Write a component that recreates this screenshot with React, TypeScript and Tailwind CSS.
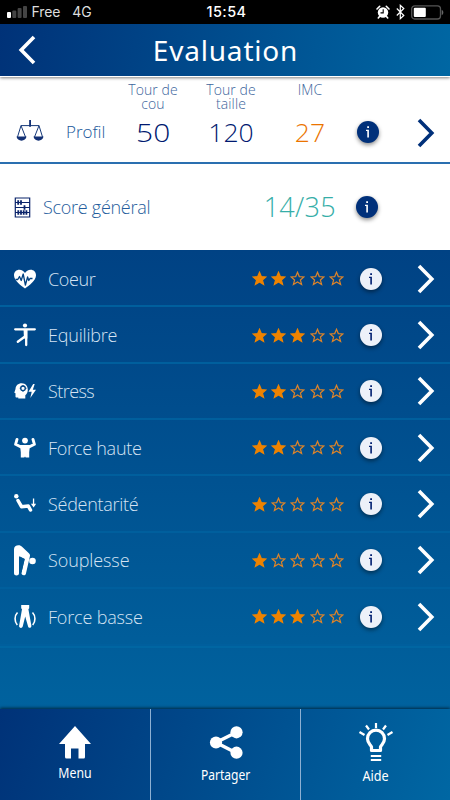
import React, { FC, ReactNode } from "react";
import clsx from "clsx";

interface Category {
  label: string;
  score: number;
  spacing: string;
  icon: ReactNode;
}

const HeartIcon = () => (
  <svg className="h-8 w-[22px]" viewBox="0 0 22 32" fill="#fff">
    <path d="M11 25.6C7 22.3 0 17.7 0 12.2 0 8.900 2.300 6.700 5.400 6.700c2.400 0 4.500 1.300 5.600 3.300 1.100-2 3.200-3.300 5.600-3.300 3.100 0 5.400 2.200 5.400 5.500 0 5.500-7 10.100-11 13.400z" />
    <path
      d="M1.500 16.500h2.300l1.700-3 1.700 4 2-6.500 2.200 11 2.200-8 1.200 3.500 1.200-2h2.500"
      fill="none"
      stroke="#004080"
      strokeWidth="1.300"
      strokeLinejoin="round"
    />
  </svg>
);

const BalanceIcon = () => (
  <svg className="h-8 w-[22px]" viewBox="0 0 22 32">
    <circle cx="11" cy="6.500" r="2.100" fill="#fff" />
    <path
      d="M1.200 10.300h19.600M12.200 11v15M11 17.500L3.800 22.800"
      fill="none"
      stroke="#fff"
      strokeWidth="2.300"
      strokeLinecap="round"
    />
    <path d="M9.500 10h3.800v9.500H10z" fill="#fff" />
  </svg>
);

const StressIcon = () => (
  <svg className="h-8 w-[22px]" viewBox="0 0 22 32">
    <path
      d="M7.800 8.300c-3.700 0-6.200 2.300-6.300 5.800L.3 17.800l1.200.5v3.200c0 .8.5 1.200 1.300 1.100l1.500-.2v1.200h7v-3.300c1.500-1.200 2.500-3.200 2.500-5.500 0-3.600-2.300-6.500-6-6.500z"
      fill="#fff"
    />
    <circle cx="9" cy="13.300" r="2.300" fill="none" stroke="#004888" strokeWidth="1.300" />
    <path d="M9 10v1.500M9 15v1.800M5.700 13.300h1.500M10.900 13.300h1.600" stroke="#004888" strokeWidth="1.100" />
    <path d="M19.200 9l-4.700 7.800h3.200L16.300 23l5.700-8.300h-3.200L20.700 9z" fill="#fff" />
  </svg>
);

const UpperStrengthIcon = () => (
  <svg className="h-8 w-[22px]" viewBox="0 0 22 32" fill="#fff">
    <circle cx="11" cy="8.600" r="2.900" />
    <path
      d="M3 7.400L1.600 12.300l4.900 2.400M19 7.400l1.400 4.900-4.900 2.400"
      fill="none"
      stroke="#fff"
      strokeWidth="2.900"
      strokeLinecap="round"
      strokeLinejoin="round"
    />
    <path d="M6 13h10l-.8 7.300v5.200h-3.500l-.7-1-.7 1H6.800v-5.200z" />
  </svg>
);

const SittingIcon = () => (
  <svg className="h-8 w-[22px]" viewBox="0 0 22 32" fill="#fff">
    <circle cx="2.300" cy="8.200" r="2.200" />
    <path
      d="M4 12.500l3.500 6.200 6.800-.7 2.200 4"
      fill="none"
      stroke="#fff"
      strokeWidth="3.500"
      strokeLinecap="round"
      strokeLinejoin="round"
    />
    <path d="M18.900 10.600h1.300v5.200h2l-2.600 3.700-2.700-3.700h2z" />
  </svg>
);

const BendingIcon = () => (
  <svg className="h-8 w-[22px]" viewBox="0 0 22 32" fill="#fff">
    <circle cx="18.500" cy="17" r="3.300" />
    <path d="M0 5.200C0 2.800 2 1.300 4.500 1.300c1.500 0 2.700.5 3.800 1.600l6.600 6.300c1 .9 1.400 2.200.9 3.500l-3.900 17.100c-.8 2.500-4.700 1.700-4.400-1L10.700 15l-5.700-2.600v16.900c0 2.900-5 2.900-5 0z" />
    <path d="M5.500 12.200l5.200 2.800L7.500 28.500 5 29.500z" fill="#005693" />
  </svg>
);

const LowerStrengthIcon = () => (
  <svg className="h-8 w-[22px]" viewBox="0 0 22 32" fill="#fff">
    <path d="M7.200 4h8v3.200l-.8 1 3 16.600c.2 2.300-2.700 2.900-3.300.6L11.200 15.500 8.700 25.600c-.7 2.200-3.900 1.400-3.600-.9L8 8.200l-.8-1z" />
    <path
      d="M3.500 11.500c-3.200 3.300-3.200 8.900-.2 12.600M18.500 11.500c3.200 3.300 3.200 8.900.2 12.600"
      fill="none"
      stroke="#fff"
      strokeWidth="1.600"
    />
  </svg>
);

const categories: Category[] = [
  { label: "Coeur", score: 2, spacing: "tracking-[-0.35px]", icon: <HeartIcon /> },
  { label: "Equilibre", score: 3, spacing: "tracking-[-0.2px]", icon: <BalanceIcon /> },
  { label: "Stress", score: 2, spacing: "tracking-[-0.55px]", icon: <StressIcon /> },
  { label: "Force haute", score: 2, spacing: "tracking-[-0.25px]", icon: <UpperStrengthIcon /> },
  { label: "Sédentarité", score: 1, spacing: "tracking-[-0.28px]", icon: <SittingIcon /> },
  { label: "Souplesse", score: 1, spacing: "tracking-[-0.1px]", icon: <BendingIcon /> },
  { label: "Force basse", score: 3, spacing: "tracking-[-0.18px]", icon: <LowerStrengthIcon /> },
];

const Chevron: FC<{ className?: string }> = ({ className }) => (
  <svg className={clsx("h-[30px] w-[18px] shrink-0", className)} viewBox="0 0 18 30" fill="none" stroke="currentColor" strokeWidth="3.600">
    <path d="M2 2l12.800 13L2 28" />
  </svg>
);

const InfoButton: FC<{ dark?: boolean }> = ({ dark }) => (
  <button
    className={clsx(
      "flex size-[22px] shrink-0 items-center justify-center rounded-full shadow-[0_2px_4px_rgba(0,0,0,0.45)]",
      dark ? "bg-[#00307a] text-white" : "bg-[#edf1f9] text-[#001f70]"
    )}
  >
    <svg className="h-[14px] w-2" viewBox="0 0 8 14">
      <path d="M3.200 1.200H5V3H3.200zM2 4.800h2.900v7.700H3.300V5.900H2z" fill="currentColor" />
    </svg>
  </button>
);

const Star: FC<{ filled: boolean }> = ({ filled }) => (
  <svg className="size-[15px]" viewBox="0 0 15 15">
    <path
      d="M7.500 1.300l1.800 4.300 4.600.4-3.500 3 1.200 4.500-4.100-2.500-4.100 2.500L4.600 9 1.100 6l4.600-.4z"
      fill={filled ? "#ee8300" : "none"}
      stroke={filled ? "#ee8300" : "#dd8429"}
      strokeWidth="1.200"
    />
  </svg>
);

const StatusBar = () => (
  <div className="relative flex h-6 items-center justify-between bg-black text-[14px] leading-6 text-[#ddd]">
    <div className="flex items-center pl-[7px]">
      <svg className="h-3 w-5" viewBox="0 0 20 12">
        <rect x="0" y="6" width="4" height="6" rx="1" fill="#fff" />
        <rect x="5.300" y="4.500" width="4" height="7.500" rx="1" fill="#444" />
        <rect x="10.600" y="2" width="4" height="10" rx="1" fill="#444" />
        <rect x="16" y="0" width="4" height="12" rx="1" fill="#444" />
      </svg>
      <span className="ml-[4.500px] tracking-[-0.1px]">Free</span>
      <span className="ml-3">4G</span>
    </div>
    <span className="absolute left-1/2 ml-[1.500px] -translate-x-1/2 text-[14.500px] font-medium tracking-[0.4px] text-white">
      15:54
    </span>
    <div className="flex items-center pr-[6px]">
      <svg className="h-[14px] w-[14px]" viewBox="0 0 14 14">
        <circle cx="7" cy="7.500" r="5.200" fill="#fff" />
        <path d="M1 4l2.700-2.700M13 4l-2.700-2.700M3.500 11.500L2.300 13M10.500 11.500l1.200 1.500" stroke="#fff" strokeWidth="1.600" strokeLinecap="round" />
        <path d="M7.200 4.300v3.600H4.500" fill="none" stroke="#000" strokeWidth="1.100" />
      </svg>
      <svg className="ml-[6px] h-4 w-[9px]" viewBox="0 0 9 16" fill="none" stroke="#fff" strokeWidth="1.200">
        <path d="M.8 4.500l7 7-3.500 3.200V1.300l3.500 3.200-7 7" />
      </svg>
      <svg className="ml-[6px] h-[15px] w-[33px]" viewBox="0 0 33 15">
        <rect x=".7" y=".8" width="28.800" height="13.200" rx="3" fill="none" stroke="#555" strokeWidth="1.300" />
        <rect x="2.800" y="2.800" width="12" height="9.200" rx="1" fill="#fff" />
        <path d="M30.700 5c2.200.4 2.200 4.600 0 5z" fill="#666" />
      </svg>
    </div>
  </div>
);

const Measure: FC<{ title: ReactNode; value: number; className: string; valueClassName?: string }> = ({
  title,
  value,
  className,
  valueClassName = "text-[#001970]",
}) => (
  <div className={clsx("flex shrink-0 flex-col items-center text-center", className)}>
    <div className="h-8 text-[14px] leading-[14px] tracking-[0.1px] whitespace-nowrap text-[#3c659c]">{title}</div>
    <div className={clsx("text-[26.500px] leading-[34px]", valueClassName)}>{value}</div>
  </div>
);

const CategoryRow: FC<{ category: Category }> = ({ category }) => (
  <li className="flex h-[56.36px] items-center border-b-2 border-[#005f9d] pt-px pr-[15px] pl-[14px] text-white">
    {category.icon}
    <span className={clsx("ml-[12px] grow text-[18px] leading-6 text-[#d5e3f3]", category.spacing)}>
      {category.label}
    </span>
    <div className="flex gap-[4.300px]">
      {[1, 2, 3, 4, 5].map((n) => (
        <Star key={n} filled={n <= category.score} />
      ))}
    </div>
    <div className="mr-[35px] ml-[16px] flex">
      <InfoButton />
    </div>
    <Chevron />
  </li>
);

const App = () => {
  return (
    <div className="flex h-[800px] w-[450px] flex-col overflow-hidden bg-white font-['Open_Sans','Noto_Sans',sans-serif] font-light">
      <div className="font-['Inter',sans-serif] font-normal">
        <StatusBar />
      </div>

      <header className="relative z-10 flex h-[53px] shrink-0 items-center border-b border-white bg-linear-[100deg] from-[#003278] to-[#0067a3] pl-[18px] text-white shadow-[0_1px_3px_rgba(0,0,0,0.5)]">
        <Chevron className="rotate-180" />
        <h1 className="grow pr-[35px] pb-px text-center font-['Noto_Sans',sans-serif] text-[28px] leading-[50px] font-normal tracking-[0.8px]">
          Evaluation
        </h1>
      </header>

      <section className="flex h-[87px] shrink-0 items-start border-b-2 border-[#2a6fb0] pt-[6px] pr-[15px] pl-[16px]">
        <svg className="mt-[36px] h-[24px] w-[28px] shrink-0" viewBox="0 0 28 24">
          <path d="M14 1v7M5 6.600h18M5 6.600L1.500 18M5 6.600L9.500 18M23 6.600L18.500 18M23 6.600L26.500 18" fill="none" stroke="#173a7a" strokeWidth="1" />
          <path d="M13.300 1h1.700v6.500h-1.700zM.5 17.500h10c-.6 5.500-9.400 5.500-10 0zM17.500 17.500h10c-.6 5.500-9.400 5.500-10 0z" fill="#123074" />
        </svg>
        <div className="mt-[37px] ml-[22px] w-[50px] text-[17px] leading-6 text-[#17579a]">Profil</div>
        <Measure className="w-[74px]" title={<>Tour de<br />cou</>} value={50} valueClassName="scale-x-113 text-[#001970]" />
        <Measure className="w-[82px]" title={<>Tour de<br />taille</>} value={120} />
        <Measure className="w-[76px]" title="IMC" value={27} valueClassName="text-[#eb7400]" />
        <div className="mt-[38px] ml-[8.500px] flex">
          <InfoButton dark />
        </div>
        <Chevron className="mt-[35px] ml-auto text-[#00307a]" />
      </section>

      <section className="flex h-[86px] shrink-0 items-center pr-[72px] pl-[14px]">
        <svg className="h-[21px] w-[17px]" viewBox="0 0 17 21" fill="none" stroke="#0b246b">
          <path d="M1.300 1h14.400v19H1.300zM1.300 5.500h14.400M1.300 10.500h14.400M1.300 15.500h14.400" strokeWidth="1.200" />
          <path d="M4.200 3.300v4.400M7 3.300v4.400M10.500 8.300v4.400M4.300 13.300v4.400M7 13.300v4.400M9.700 13.300v4.400M12.400 13.300v4.400" strokeWidth="1.800" />
        </svg>
        <span className="ml-[12px] text-[18px] leading-6 tracking-[-0.28px] text-[#245c9c]">Score général</span>
        <span className="ml-auto text-[27px] leading-8 tracking-[0.3px] text-[#36aea8]">14/35</span>
        <div className="ml-[20px] flex">
          <InfoButton dark />
        </div>
      </section>

      <main className="grow bg-linear-to-b from-[#004284] to-[#00629e] pt-px">
        <ul>
          {categories.map((category) => (
            <CategoryRow key={category.label} category={category} />
          ))}
        </ul>
        <div className="h-[2px] bg-[#0066a2]" />
      </main>

      <nav className="relative grid h-[91px] shrink-0 grid-cols-[151px_150px_149px] divide-x divide-[#8db0d3] bg-linear-[110deg] from-[#003278] to-[#0067a3] font-['Noto_Sans',sans-serif] text-[14px] leading-5 font-normal text-white shadow-[0_-1px_3px_rgba(0,0,0,0.6)]">
        <a className="flex flex-col items-center pt-[16px]">
          <svg className="h-[35px] w-[34px]" viewBox="0 0 34 35" fill="#fff">
            <path d="M17 1L1 19h6v13q0 1.500 1.500 1.500H13v-10h7.500v10h5.200q1.300 0 1.300-1.500V19h6z" />
          </svg>
          <span className="mt-[3px] scale-x-88">Menu</span>
        </a>
        <a className="flex flex-col items-center pt-[16px]">
          <svg className="h-[35px] w-[34px]" viewBox="0 0 34 35" fill="#fff">
            <path d="M28 7L7 17.500 28 28.300" fill="none" stroke="#fff" strokeWidth="3.500" />
            <circle cx="27.500" cy="7.300" r="6.100" />
            <circle cx="7" cy="17.500" r="6.100" />
            <circle cx="27.500" cy="27.700" r="6.100" />
          </svg>
          <span className="mt-[5px] scale-x-86">Partager</span>
        </a>
        <a className="flex flex-col items-center pt-[13px]">
          <svg className="h-10 w-9" viewBox="0 0 36 40" fill="none" stroke="#fff">
            <path d="M18 1v5M8 3.500l3 4M28 3.500l-3 4M1.500 10l5 3M34.500 10l-5 3" strokeWidth="2.200" />
            <path d="M13.500 28.500v-3.500c-.7-2.300-4-3.700-4-8.300a8.500 8.500 0 0 1 17 0c0 4.600-3.300 6-4 8.300v3.500z" strokeWidth="3.200" strokeLinejoin="round" />
            <path d="M12.800 34h10.400M12.800 38h10.400" strokeWidth="2.200" />
          </svg>
          <span className="mt-[4px] scale-x-90">Aide</span>
        </a>
      </nav>
    </div>
  );
};

export default App;
